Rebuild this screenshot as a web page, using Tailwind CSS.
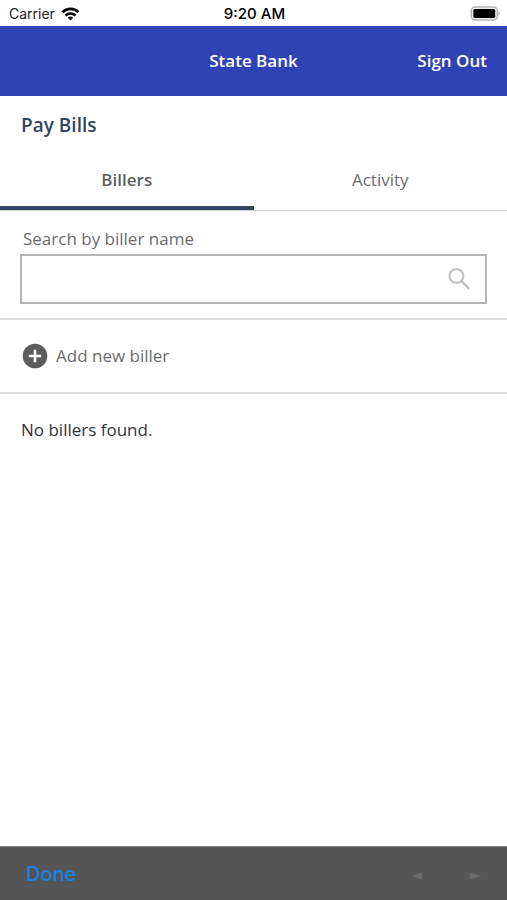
<!DOCTYPE html>
<html lang="en">
<head>
<meta charset="utf-8">
<meta name="viewport" content="width=device-width, initial-scale=1">
<title>Pay Bills</title>
<script src="https://cdn.jsdelivr.net/npm/@tailwindcss/browser@4"></script>
</head>
<body class="flex min-h-screen flex-col bg-white font-['Open_Sans',sans-serif] text-[17px] leading-6 text-[#6b6b6b]">
  <div class="grid h-[26px] grid-cols-3 items-center pr-[7px] pl-[9px] font-['Inter',sans-serif] text-[14px] leading-5 text-black">
    <div class="flex items-center gap-1.5 pt-px text-[#222]">
      <span>Carrier</span>
      <svg class="h-[14px] w-[19px]" viewBox="0 0 18 14" fill="none" stroke="#000" stroke-width="2.6" aria-label="Wi-Fi">
        <path d="M1 5.2a11.4 11.4 0 0 1 16 0M4 8.5a7.2 7.2 0 0 1 10 0"/>
        <path d="M9 13.6 6.3 10.8a3.9 3.9 0 0 1 5.4 0z" fill="#000" stroke="none"/>
      </svg>
    </div>
    <div class="pt-px text-center text-[15px] font-medium">9:20 AM</div>
    <svg class="h-[15px] w-[30px] justify-self-end" viewBox="0 0 30 15" aria-label="Battery">
      <rect x="1.3" y="1" width="26" height="13" rx="3.8" fill="#eee" stroke="#b9b9b9" stroke-width="1.6"/>
      <rect x="3.4" y="3" width="21.8" height="9" rx="1.4" fill="#000"/>
      <path d="M28.4 5.2q3.4 2.3 0 4.6z" fill="#b9b9b9"/>
    </svg>
  </div>

  <header class="grid h-[70px] grid-cols-3 items-center bg-[#2f43b4] px-5 font-semibold text-white">
    <div class="col-start-2 text-center whitespace-nowrap">State Bank</div>
    <button type="button" class="justify-self-end whitespace-nowrap">Sign Out</button>
  </header>

  <main class="flex-1">
    <h1 class="px-[21px] pt-[17px] text-[19px] font-semibold text-[#33435f]">Pay Bills</h1>
    <nav class="mt-3 grid h-[62px] grid-cols-2 border-b border-[#cfcfcf]" role="tablist">
      <button type="button" role="tab" aria-selected="true" class="border-b-4 border-[#344563] pt-1 font-semibold text-[#5f5f5f]">Billers</button>
      <button type="button" role="tab" aria-selected="false" class="border-b-4 border-transparent pt-1">Activity</button>
    </nav>
    <div class="border-b-2 border-[#dfdfdf] px-5 pt-4 pb-[14px]">
      <label for="search" class="block pl-[3px]">Search by biller name</label>
      <div class="mt-[3px] flex h-[50px] items-center border-2 border-[#b4b4b4] pr-3.5">
        <input id="search" type="text" class="h-full min-w-0 flex-1 px-3 outline-none">
        <svg class="size-6" viewBox="0 0 24 24" fill="none" stroke="#c4c4c4" aria-hidden="true">
          <circle cx="9.4" cy="9" r="6.9" stroke-width="2.2"/>
          <path d="m14.4 14 7.8 7.8" stroke-width="2.5"/>
        </svg>
      </div>
    </div>
    <button type="button" class="flex h-[74px] w-full items-center gap-2 border-b-2 border-[#dfdfdf] pl-[22px] text-left">
      <svg class="size-[26px]" viewBox="0 0 26 26" aria-hidden="true">
        <circle cx="13" cy="13" r="12.3" fill="#5c5c5c"/>
        <path d="M13 6.8v12.4M6.8 13h12.4" stroke="#fff" stroke-width="2.6"/>
      </svg>
      <span>Add new biller</span>
    </button>
    <p class="px-[21px] pt-6 text-[#333]">No billers found.</p>
  </main>

  <footer class="flex h-[54px] items-center justify-between border-t border-[#8a8a8a] bg-[#565656] px-[26px]">
    <button type="button" class="font-['Inter',sans-serif] text-[20px] font-medium text-[#1b80e4]">Done</button>
    <div class="flex gap-[47px] pt-1">
      <button type="button" aria-label="Previous"><svg class="h-2 w-[11px]" viewBox="0 0 11 8"><path d="M0 4 9 0.4Q11.6 4 9 7.6z" fill="#6c6c6c"/></svg></button>
      <button type="button" aria-label="Next"><svg class="h-2 w-[11px]" viewBox="0 0 11 8"><path d="M11 4 0 .4v7.2z" fill="#6c6c6c"/></svg></button>
    </div>
  </footer>
</body>
</html>
